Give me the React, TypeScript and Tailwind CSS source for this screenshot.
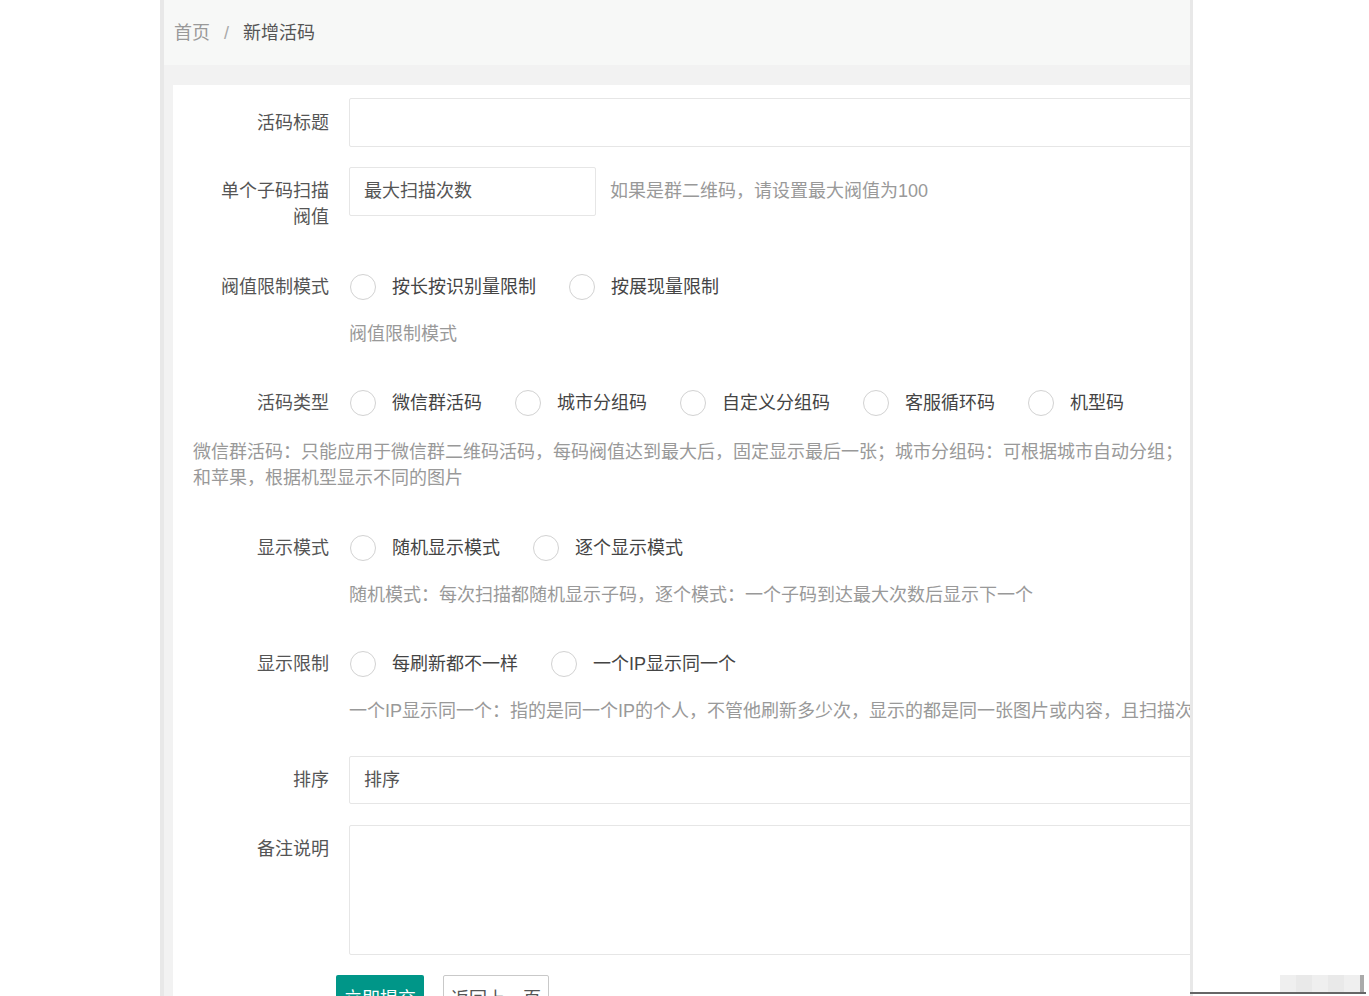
import React from "react";

// ---- 小部件 ----

function Radio({ label }: { label: string }) {
  return (
    <label className="flex items-center mr-[33px] shrink-0">
      <span className="w-[26px] h-[26px] rounded-full border-[1.5px] border-[#d2d2d2] bg-white" />
      <span className="ml-[16px] text-[#444]">{label}</span>
    </label>
  );
}

function Label({ children, top }: { children: React.ReactNode; top?: boolean }) {
  return (
    <div
      className={`w-[156px] shrink-0 text-right text-[#555] leading-[26px] ${
        top ? "pt-[11px]" : "self-center"
      }`}
    >
      {children}
    </div>
  );
}

function Help({ children }: { children: React.ReactNode }) {
  return (
    <p className="mt-[16px] ml-[176px] text-[#999] leading-[26px] whitespace-nowrap">{children}</p>
  );
}

const TYPES = ["微信群活码", "城市分组码", "自定义分组码", "客服循环码", "机型码"];

// ---- ページ ----

export default function App() {
  return (
    <div
      className="relative w-[1369px] h-[996px] bg-white overflow-hidden text-[18px]"
      style={{ fontFamily: '"Liberation Sans", "Noto Sans CJK SC", sans-serif' }}
    >
      <div className="ml-[160px] w-[1033px] h-full border-l-[4px] border-r-[3px] border-[#e8e8e8] bg-[#f2f2f2] flex flex-col overflow-hidden">
        {/* パンくず */}
        <div className="h-[65px] shrink-0 bg-[#f7f8f7] flex items-center pl-[10px] pt-[2px] gap-[14px]">
          <span className="text-[#999]">首页</span>
          <span className="text-[#aaa]">/</span>
          <span className="text-[#555]">新增活码</span>
        </div>

        <div className="flex-1 pt-[20px] pl-[9px]">
          <div className="h-full bg-white pt-[13px] overflow-hidden">
            {/* 活码标题 */}
            <div className="flex h-[49px]">
              <Label>活码标题</Label>
              <div className="ml-[20px] w-[900px] shrink-0 border border-[#e6e6e6] rounded-[2px]" />
            </div>

            {/* 扫描阀值 */}
            <div className="flex mt-[20px]">
              <Label top>
                单个子码扫描
                <br />
                阀值
              </Label>
              <div className="ml-[20px] flex items-start">
                <div className="w-[247px] h-[49px] border border-[#e6e6e6] rounded-[2px] flex items-center px-[14px] text-[#555]">
                  最大扫描次数
                </div>
                <span className="ml-[14px] h-[49px] flex items-center text-[#999]">
                  如果是群二维码，请设置最大阀值为100
                </span>
              </div>
            </div>

            {/* 阀值限制模式 */}
            <div className="flex h-[36px] mt-[39px]">
              <Label>阀值限制模式</Label>
              <div className="ml-[21px] flex items-center">
                <Radio label="按长按识别量限制" />
                <Radio label="按展现量限制" />
              </div>
            </div>
            <Help>阀值限制模式</Help>

            {/* 活码类型 */}
            <div className="flex h-[36px] mt-[38px]">
              <Label>活码类型</Label>
              <div className="ml-[21px] flex items-center">
                {TYPES.map((t) => (
                  <Radio key={t} label={t} />
                ))}
              </div>
            </div>
            <div className="mt-[18px] ml-[20px] text-[#999] leading-[26px] whitespace-nowrap">
              <p>
                微信群活码：只能应用于微信群二维码活码，每码阀值达到最大后，固定显示最后一张；城市分组码：可根据城市自动分组；
              </p>
              <p>和苹果，根据机型显示不同的图片</p>
            </div>

            {/* 显示模式 */}
            <div className="flex h-[36px] mt-[39px]">
              <Label>显示模式</Label>
              <div className="ml-[21px] flex items-center">
                <Radio label="随机显示模式" />
                <Radio label="逐个显示模式" />
              </div>
            </div>
            <Help>随机模式：每次扫描都随机显示子码，逐个模式：一个子码到达最大次数后显示下一个</Help>

            {/* 显示限制 */}
            <div className="flex h-[36px] mt-[38px]">
              <Label>显示限制</Label>
              <div className="ml-[21px] flex items-center">
                <Radio label="每刷新都不一样" />
                <Radio label="一个IP显示同一个" />
              </div>
            </div>
            <Help>
              一个IP显示同一个：指的是同一个IP的个人，不管他刷新多少次，显示的都是同一张图片或内容，且扫描次数只计算一次
            </Help>

            {/* 排序 */}
            <div className="flex h-[48px] mt-[32px]">
              <Label>排序</Label>
              <div className="ml-[20px] w-[900px] shrink-0 border border-[#e6e6e6] rounded-[2px] flex items-center px-[14px] text-[#555]">
                排序
              </div>
            </div>

            {/* 备注说明 */}
            <div className="flex mt-[21px]">
              <Label top>备注说明</Label>
              <div className="ml-[20px] w-[900px] h-[130px] shrink-0 border border-[#e6e6e6] rounded-[2px]" />
            </div>

            {/* ボタン */}
            <div className="flex mt-[20px] ml-[163px] gap-[19px]">
              <button
                type="button"
                className="w-[88px] h-[49px] rounded-[2px] bg-[#009688] text-white"
              >
                立即提交
              </button>
              <button
                type="button"
                className="w-[106px] h-[49px] rounded-[2px] border border-[#c9c9c9] bg-white text-[#555]"
              >
                返回上一页
              </button>
            </div>
          </div>
        </div>
      </div>

      {/* 右下の断片 */}
      <div className="absolute left-[1190px] top-[992px] w-[176px] h-[2px] bg-[#666]" />
      <div className="absolute left-[1280px] top-[975px] flex h-[17px]">
        <div className="w-[16px] bg-[#efefef]" />
        <div className="w-[16px] bg-[#e9e9e9]" />
        <div className="w-[16px] bg-[#efefef]" />
        <div className="w-[16px] bg-[#e9e9e9]" />
        <div className="w-[16px] bg-[#efefef]" />
        <div className="w-[4px] bg-[#aaa]" />
      </div>
    </div>
  );
}
